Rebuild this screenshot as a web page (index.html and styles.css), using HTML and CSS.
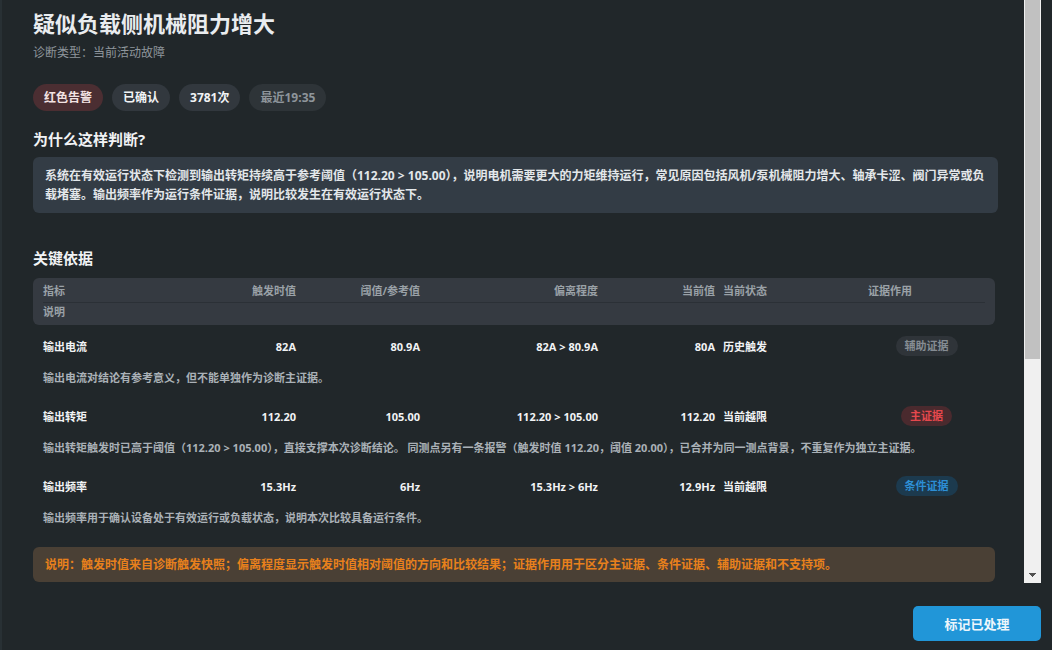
FILE: index.html
```html
<!DOCTYPE html>
<html lang="zh-CN">
<head>
<meta charset="UTF-8">
<title>诊断详情</title>
<link rel="stylesheet" href="styles.css">
</head>
<body>
<div class="dialog">
  <div class="scroll-area">
    <div class="content">
      <h1 class="title">疑似负载侧机械阻力增大</h1>
      <div class="subtitle">诊断类型：当前活动故障</div>

      <div class="tags">
        <span class="tag tag-red">红色告警</span>
        <span class="tag">已确认</span>
        <span class="tag">3781次</span>
        <span class="tag tag-muted">最近19:35</span>
      </div>

      <h2 class="section-title first">为什么这样判断?</h2>
      <div class="reason">系统在有效运行状态下检测到输出转矩持续高于参考阈值（112.20 &gt; 105.00），说明电机需要更大的力矩维持运行，常见原因包括风机/泵机械阻力增大、轴承卡涩、阀门异常或负载堵塞。输出频率作为运行条件证据，说明比较发生在有效运行状态下。</div>

      <h2 class="section-title">关键依据</h2>
      <div class="evidence">
        <div class="ev-head">
          <div class="ev-grid head-row">
            <span>指标</span>
            <span class="r">触发时值</span>
            <span class="r">阈值/参考值</span>
            <span class="r">偏离程度</span>
            <span class="r">当前值</span>
            <span>当前状态</span>
            <span>证据作用</span>
          </div>
          <div class="head-row2">说明</div>
        </div>

        <div class="ev-item">
          <div class="ev-grid ev-main">
            <span>输出电流</span>
            <span class="r">82A</span>
            <span class="r">80.9A</span>
            <span class="r">82A &gt; 80.9A</span>
            <span class="r">80A</span>
            <span>历史触发</span>
            <span class="c"><em class="role role-aux">辅助证据</em></span>
          </div>
          <div class="ev-desc">输出电流对结论有参考意义，但不能单独作为诊断主证据。</div>
        </div>

        <div class="ev-item">
          <div class="ev-grid ev-main">
            <span>输出转矩</span>
            <span class="r">112.20</span>
            <span class="r">105.00</span>
            <span class="r">112.20 &gt; 105.00</span>
            <span class="r">112.20</span>
            <span>当前越限</span>
            <span class="c"><em class="role role-main">主证据</em></span>
          </div>
          <div class="ev-desc">输出转矩触发时已高于阈值（112.20 &gt; 105.00），直接支撑本次诊断结论。 同测点另有一条报警（触发时值 112.20，阈值 20.00），已合并为同一测点背景，不重复作为独立主证据。</div>
        </div>

        <div class="ev-item">
          <div class="ev-grid ev-main">
            <span>输出频率</span>
            <span class="r">15.3Hz</span>
            <span class="r">6Hz</span>
            <span class="r">15.3Hz &gt; 6Hz</span>
            <span class="r">12.9Hz</span>
            <span>当前越限</span>
            <span class="c"><em class="role role-cond">条件证据</em></span>
          </div>
          <div class="ev-desc">输出频率用于确认设备处于有效运行或负载状态，说明本次比较具备运行条件。</div>
        </div>
      </div>

      <div class="note">说明：触发时值来自诊断触发快照；偏离程度显示触发时值相对阈值的方向和比较结果；证据作用用于区分主证据、条件证据、辅助证据和不支持项。</div>
    </div>
    <!-- 滚动条 -->
    <div class="vscroll">
      <div class="vscroll-thumb"></div>
      <div class="vscroll-track"></div>
      <div class="vscroll-btn"></div>
    </div>
  </div>
  <div class="footer">
    <button class="btn-done">标记已处理</button>
  </div>
</div>
</body>
</html>
```

FILE: styles.css
```css
body{
    margin: 0;
    background-color: #21272a;
    font-family: "Open Sans", "Noto Sans CJK SC", sans-serif;
    color: #eef0f2;
}
.dialog{
    height: 650px;
    padding-right: 11px;
    display: flex;
    flex-direction: column;
    border-left: 2px solid #283034;
    box-sizing: border-box;
}
.scroll-area{
    height: 583px;
    display: flex;
    flex-shrink: 0;
}
.content{
    flex: 1;
    overflow: hidden;
    padding: 8px 26px 0 31px;
}
.vscroll{
    width: 17px;
    display: flex;
    flex-direction: column;
    background-color: #f0f0f0;
}
.vscroll-thumb{
    height: 359px;
    margin: 0 1px;
    background-color: #c1c1c1;
}
.vscroll-track{
    flex: 1;
}
.vscroll-btn{
    height: 17px;
    background-image: conic-gradient(from -45deg at 50% 100%, #505050 90deg, transparent 90deg);
    background-size: 7px 4px;
    background-position: center;
    background-repeat: no-repeat;
}
.title{
    font-size: 22px;
    line-height: 30px;
    font-weight: 700;
    margin: 0;
    color: #e9ecef;
}
.subtitle{
    margin-top: 6px;
    font-size: 12px;
    line-height: 18px;
    color: #8f969c;
}
.tags{
    display: flex;
    gap: 9px;
    margin-top: 22px;
}
.tag{
    font-size: 12px;
    font-weight: 700;
    line-height: 17px;
    padding: 5px 11px;
    border-radius: 14px;
    background-color: #32383e;
    color: #f1f3f5;
}
.tag-red{
    background-color: #4b2e32;
    color: #f3e3e3;
}
.tag-muted{
    background-color: #2e3438;
    color: #8e959b;
}
.section-title{
    font-size: 15px;
    line-height: 22px;
    font-weight: 700;
    margin: 34px 0 0;
    color: #f1f3f5;
}
.section-title.first{
    margin-top: 17px;
}
.reason{
    margin-top: 7px;
    background-color: #333c45;
    border-radius: 6px;
    padding: 9px 12px;
    font-size: 12px;
    line-height: 19px;
    font-weight: 700;
    color: #e3e7ea;
}
.evidence{
    margin: 9px 3px 0 0;
}
.ev-head{
    background-color: #353a41;
    border-radius: 6px;
    padding: 0 10px 4px;
    color: #9aa1a7;
    font-size: 11px;
    font-weight: 700;
}
.ev-grid{
    display: grid;
    grid-template-columns: 150px 95px 116px 170px 109px 137px 117px;
    column-gap: 8px;
    align-items: center;
}
.head-row{
    line-height: 20px;
    padding: 3px 0 1px;
    border-bottom: 1px solid #2b3036;
}
.head-row2{
    line-height: 18px;
}
.r{
    text-align: right;
}
.c{
    text-align: center;
}
.ev-item{
    padding: 0 10px;
    margin-top: 3px;
}
.ev-item + .ev-item{
    margin-top: 6px;
}
.ev-main{
    height: 36px;
    font-size: 11px;
    font-weight: 700;
    color: #f1f3f5;
}
.ev-desc{
    height: 28px;
    line-height: 28px;
    font-size: 11px;
    font-weight: 700;
    color: #aab1b7;
}
.role{
    display: inline-block;
    font-style: normal;
    font-size: 11px;
    font-weight: 700;
    line-height: 20px;
    padding: 0 9px;
    border-radius: 10px;
}
.role-aux{
    background-color: #2f3439;
    color: #858c93;
}
.role-main{
    background-color: #4a2a2e;
    color: #e5484d;
}
.role-cond{
    background-color: #1c3a4e;
    color: #2d8fd5;
}
.note{
    margin: 15px 3px 0 0;
    background-color: #4a4035;
    border-radius: 6px;
    padding: 8px 12px;
    font-size: 12px;
    line-height: 19px;
    font-weight: 700;
    color: #e8801c;
}
.footer{
    display: flex;
    justify-content: flex-end;
    padding-top: 23px;
}
.btn-done{
    width: 128px;
    height: 35px;
    border: none;
    border-radius: 5px;
    background-color: #2196d8;
    color: #eef6fc;
    font-family: inherit;
    font-size: 13px;
    font-weight: 700;
}
```
